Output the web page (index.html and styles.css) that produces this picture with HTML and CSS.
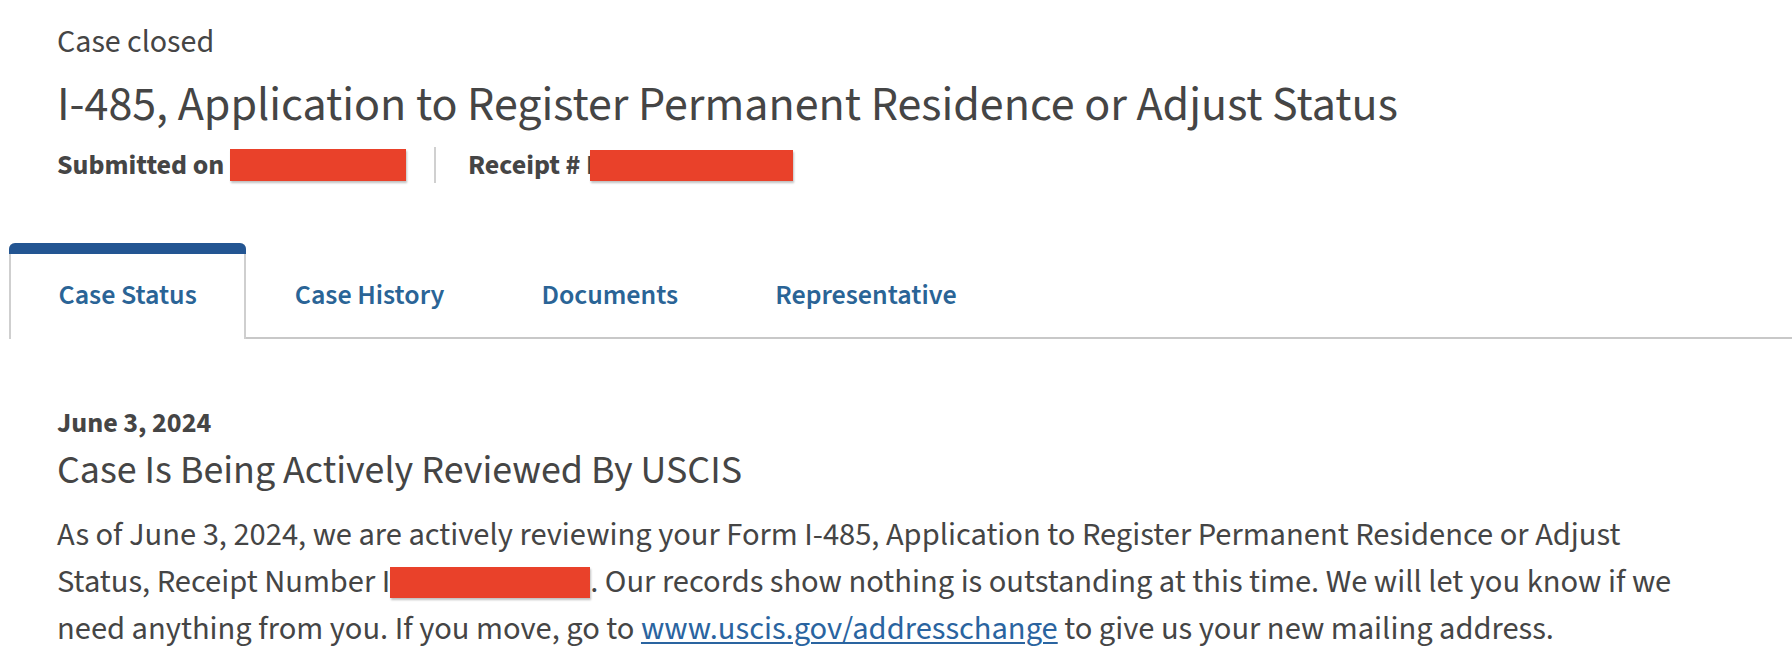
FILE: index.html
```html
<!DOCTYPE html>
<html lang="en">
<head>
<meta charset="utf-8">
<title>Case Status</title>
<link rel="stylesheet" href="styles.css">
</head>
<body>
<div class="page">
  <header class="case-header">
    <div class="case-state">Case closed</div>
    <h1 class="case-title">I-485, Application to Register Permanent Residence or Adjust Status</h1>
    <div class="case-meta">
      <div class="meta-item">Submitted on <span class="redact redact-date"></span></div>
      <div class="meta-divider"></div>
      <div class="meta-item">Receipt # I<span class="redact redact-receipt"></span></div>
    </div>
  </header>

  <nav class="tabs">
    <div class="tab tab-active">Case Status</div>
    <div class="tab">Case History</div>
    <div class="tab">Documents</div>
    <div class="tab">Representative</div>
  </nav>

  <section class="status">
    <div class="status-date">June 3, 2024</div>
    <h2 class="status-title">Case Is Being Actively Reviewed By USCIS</h2>
    <p class="status-text">As of June 3, 2024, we are actively reviewing your Form I-485, Application to Register Permanent Residence or Adjust Status, Receipt Number I<span class="redact redact-inline"></span>. Our records show nothing is outstanding at this time. We will let you know if we need anything from you. If you move, go to <a class="link" href="#">www.uscis.gov/addresschange</a> to give us your new mailing address.</p>
  </section>
</div>
</body>
</html>
```

FILE: styles.css
```css
html, body {
  margin: 0;
  padding: 0;
  background: #ffffff;
}

body {
  font-family: "Source Sans Pro", "Source Sans 3", Lato, "Open Sans", sans-serif;
  color: #454545;
}

.page {
  width: 1792px;
  height: 670px;
  overflow: hidden;
}

.case-header {
  padding: 22px 0 0 57px;
}

.case-state {
  font-size: 32px;
  line-height: 40px;
}

.case-title {
  margin: 15px 0 0;
  font-size: 48px;
  font-weight: 400;
  line-height: 56px;
}

.case-meta {
  margin-top: 12px;
  display: flex;
  align-items: center;
  height: 40px;
  font-size: 28px;
  font-weight: 700;
}

.meta-item {
  display: flex;
  align-items: center;
  white-space: pre;
}

.redact {
  display: inline-block;
  background: #e9412a;
  box-shadow: 1px 2px 2px rgba(0, 0, 0, 0.25);
}

.redact-date {
  width: 176px;
  height: 32px;
}

.redact-receipt {
  width: 203px;
  height: 31px;
  margin-left: -4px;
}

.meta-divider {
  width: 2px;
  height: 36px;
  background: #d0d0d0;
  margin: 0 32px 0 28px;
}

.tabs {
  margin: 58px 0 0 9px;
  display: flex;
  border-bottom: 2px solid #c8c8c8;
  height: 94px;
}

.tab {
  display: flex;
  align-items: center;
  padding: 9px 46.5px 0;
  border: 2px solid transparent;
  border-width: 0 2px;
  font-size: 28px;
  font-weight: 600;
  color: #2a6496;
}

.tab-active {
  position: relative;
  padding-left: 47.5px;
  padding-right: 47.5px;
  border-color: #cfcfcf;
  border-radius: 6px 6px 0 0;
  background: #ffffff;
  margin-bottom: -2px;
  padding-bottom: 2px;
}

.tab-active::before {
  content: "";
  position: absolute;
  left: -2px;
  right: -2px;
  top: 0;
  height: 11px;
  background: #235592;
  border-radius: 6px 6px 0 0;
}

.status {
  padding-left: 57px;
  margin-top: 68px;
}

.status-date {
  font-size: 28px;
  font-weight: 700;
  line-height: 32px;
}

.status-title {
  margin: 10px 0 0;
  font-size: 40px;
  font-weight: 400;
  line-height: 44px;
}

.status-text {
  margin: 19px 0 0;
  width: 1655px;
  font-size: 32.5px;
  line-height: 47px;
}

.redact-inline {
  width: 200px;
  height: 31px;
  vertical-align: -6px;
}

.link {
  color: #2a64a0;
  text-decoration: underline;
  text-decoration-thickness: 2px;
  text-underline-offset: 3px;
}
```
